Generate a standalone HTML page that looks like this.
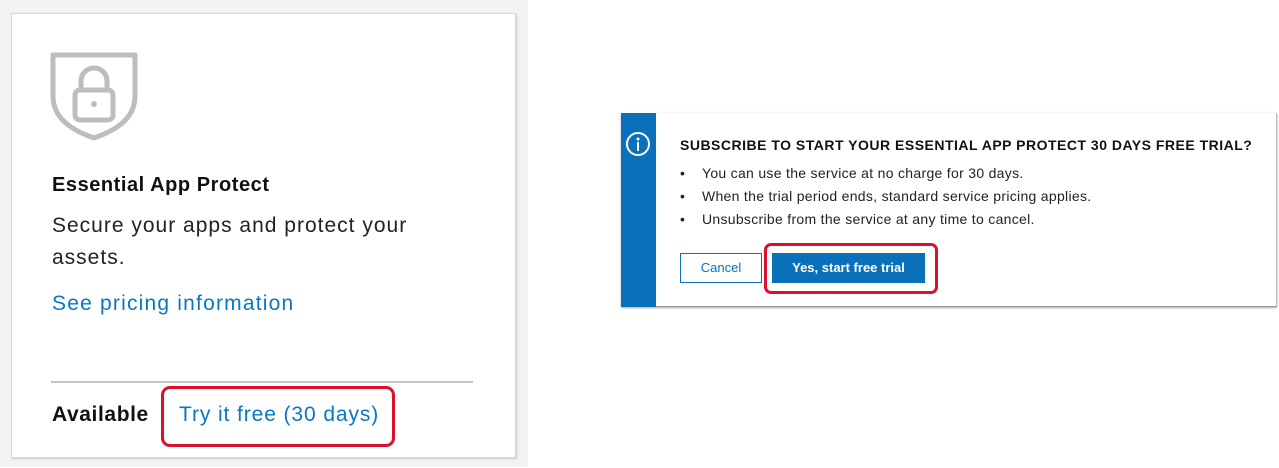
<!DOCTYPE html>
<html><head><style>
body{margin:0;width:1279px;height:468px;background:#fff;font-family:"Liberation Sans",sans-serif;position:relative;overflow:hidden}
.a{position:absolute}
</style></head><body>
<div class="a" style="left:0;top:0;width:528px;height:467px;background:#f3f3f3"></div>
<div class="a" style="left:11px;top:13px;width:503px;height:443px;background:#fff;border:1px solid #d8d8d8;box-shadow:1px 1px 2px #ccc"></div>
<svg class="a" style="left:49px;top:52px" width="90" height="90" viewBox="0 0 90 90">
<path d="M4 3 H86 V44 C86 66 68 78 45 86 C22 78 4 66 4 44 Z" fill="none" stroke="#bdbdbd" stroke-width="5" stroke-linejoin="round"/>
<rect x="26" y="38" width="38" height="30" rx="5" fill="none" stroke="#bdbdbd" stroke-width="5"/>
<path d="M32 38 V29 A13 13 0 0 1 58 29 V38" fill="none" stroke="#bdbdbd" stroke-width="5"/>
<circle cx="45" cy="52" r="3" fill="#bdbdbd"/>
</svg>
<div class="a" style="left:52px;top:174px;font-size:20px;font-weight:bold;color:#111;letter-spacing:0.55px">Essential App Protect</div>
<div class="a" style="left:52px;top:210px;font-size:21px;line-height:32px;color:#222;width:420px;letter-spacing:1px">Secure your apps and protect your assets.</div>
<div class="a" style="left:52px;top:292px;font-size:21px;color:#0a77c2;letter-spacing:1.2px">See pricing information</div>
<div class="a" style="left:51px;top:381px;width:422px;height:2px;background:#c4c4c4"></div>
<div class="a" style="left:52px;top:403px;font-size:21px;font-weight:bold;color:#111;letter-spacing:0.6px">Available</div>
<div class="a" style="left:161px;top:386px;width:228px;height:55px;border:3px solid #dc0f2e;border-radius:9px"></div>
<div class="a" style="left:179px;top:403px;font-size:21px;color:#0a77c2;letter-spacing:0.9px">Try it free (30 days)</div>

<div class="a" style="left:621px;top:113px;width:655px;height:193px;background:#fff;border-right:1px solid #bbb;border-bottom:1px solid #999;box-shadow:0 1px 2px #aaa"></div>
<div class="a" style="left:621px;top:113px;width:35px;height:194px;background:#0b70ba"></div>
<svg class="a" style="left:625px;top:131px" width="26" height="26" viewBox="0 0 26 26"><circle cx="13" cy="13" r="11" fill="none" stroke="#fff" stroke-width="2"/><circle cx="13" cy="8" r="1.5" fill="#fff"/><rect x="12" y="11" width="2" height="9" fill="#fff"/></svg>
<div class="a" style="left:680px;top:137px;font-size:14px;font-weight:bold;color:#111;letter-spacing:0.5px">SUBSCRIBE TO START YOUR ESSENTIAL APP PROTECT 30 DAYS FREE TRIAL?</div>
<div class="a" style="left:680px;top:162px;font-size:14px;line-height:23px;color:#222;letter-spacing:0.3px">
<div>•&nbsp;&nbsp;&nbsp;&nbsp;You can use the service at no charge for 30 days.</div>
<div>•&nbsp;&nbsp;&nbsp;&nbsp;When the trial period ends, standard service pricing applies.</div>
<div>•&nbsp;&nbsp;&nbsp;&nbsp;Unsubscribe from the service at any time to cancel.</div></div>
<div class="a" style="left:680px;top:253px;width:80px;height:28px;border:1px solid #0b70ba;color:#0b70ba;font-size:13px;line-height:28px;text-align:center">Cancel</div>
<div class="a" style="left:764px;top:243px;width:168px;height:45px;border:3px solid #dc0f2e;border-radius:7px"></div>
<div class="a" style="left:772px;top:253px;width:153px;height:30px;background:#0b70ba;color:#fff;font-size:13px;font-weight:bold;line-height:30px;text-align:center">Yes, start free trial</div>
</body></html>
